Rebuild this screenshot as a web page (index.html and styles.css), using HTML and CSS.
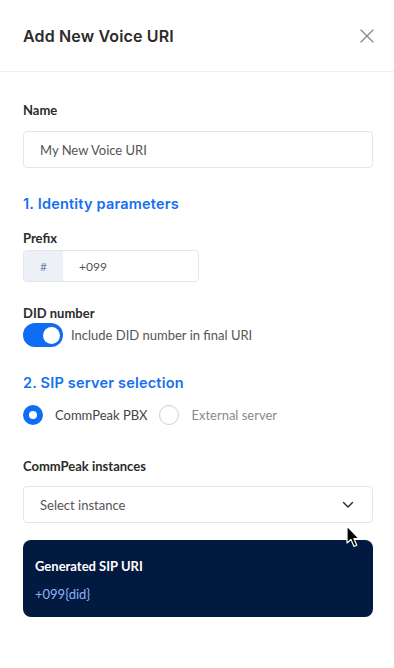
FILE: index.html
```html
<!DOCTYPE html>
<html lang="en">
<head>
    <meta charset="UTF-8">
    <meta name="viewport" content="width=device-width, initial-scale=1.0">
    <title>Add New Voice URI</title>
    <link rel="stylesheet" href="styles.css">
</head>
<body>
    <div class="panel">
        <div class="panel-header">
            <h1>Add New Voice URI</h1>
            <button class="close-btn" aria-label="Close">
                <svg width="14" height="14" viewBox="0 0 14 14">
                    <path d="M1 1 L13 13 M13 1 L1 13" stroke="#8a8a8a" stroke-width="1.4" stroke-linecap="round"/>
                </svg>
            </button>
        </div>

        <div class="panel-body">
            <label class="field-label name-label">Name</label>
            <div class="text-input">My New Voice URI</div>

            <h2 class="section-title first">1. Identity parameters</h2>

            <label class="field-label prefix-label">Prefix</label>
            <div class="prefix-input">
                <span class="prefix-addon">#</span>
                <span class="prefix-value">+099</span>
            </div>

            <label class="field-label did-label">DID number</label>
            <div class="toggle-row">
                <span class="toggle"><span class="toggle-knob"></span></span>
                <span class="toggle-text">Include DID number in final URI</span>
            </div>

            <h2 class="section-title second">2. SIP server selection</h2>

            <div class="radio-row">
                <span class="radio checked"></span>
                <span class="radio-text">CommPeak PBX</span>
                <span class="radio"></span>
                <span class="radio-text muted">External server</span>
            </div>

            <label class="field-label instances-label">CommPeak instances</label>
            <div class="select-input">
                <span>Select instance</span>
                <svg width="12" height="8" viewBox="0 0 12 8">
                    <path d="M1.5 1.5 L6 6 L10.5 1.5" fill="none" stroke="#333" stroke-width="1.5" stroke-linecap="round" stroke-linejoin="round"/>
                </svg>
            </div>

            <div class="uri-card">
                <div class="uri-title">Generated SIP URI</div>
                <div class="uri-value">+099{did}</div>
            </div>
        </div>

        <svg class="cursor" width="16" height="24" viewBox="0 0 16 24">
            <path d="M1 1 L1 18 L5 14.5 L8 21.5 L10.8 20.3 L7.9 13.5 L13 13.5 Z" fill="#000" stroke="#fff" stroke-width="1.2" stroke-linejoin="round"/>
        </svg>
    </div>
</body>
</html>
```

FILE: styles.css
```css
body {
    margin: 0;
    background: #ffffff;
    font-family: Lato, "Noto Sans", sans-serif;
    color: #2b2b2b;
}

.panel {
    position: relative;
    width: 394px;
    min-height: 668px;
}

.panel-header {
    height: 71px;
    padding: 0 20px 0 23px;
    display: flex;
    align-items: center;
    justify-content: space-between;
    border-bottom: 1px solid #efefef;
}

.panel-header h1 {
    margin: 0;
    font-family: Inter, sans-serif;
    font-size: 16px;
    font-weight: 600;
    letter-spacing: 0.15px;
    color: #2b2b2b;
}

.close-btn {
    border: none;
    background: none;
    padding: 0;
    width: 14px;
    height: 14px;
    display: flex;
    margin-top: 1px;
}

.panel-body {
    padding: 0 21px 0 23px;
    display: flex;
    flex-direction: column;
}

.field-label {
    display: block;
    font-size: 13px;
    font-weight: 700;
    line-height: 16px;
    color: #2b2b2b;
}

.name-label {
    margin-top: 30px;
}

.text-input,
.select-input {
    height: 35px;
    margin-top: 13px;
    padding: 0 16px;
    border: 1px solid #e6e6e6;
    border-radius: 4px;
    display: flex;
    align-items: center;
    font-size: 13px;
    color: #555;
}

.section-title {
    margin: 0;
    font-family: Inter, sans-serif;
    font-size: 14.5px;
    font-weight: 600;
    letter-spacing: 0.2px;
    line-height: 20px;
    color: #1570ef;
}

.section-title.first {
    margin-top: 26px;
}

.prefix-label {
    margin-top: 16px;
}

.prefix-input {
    width: 174px;
    height: 30px;
    margin-top: 4px;
    border: 1px solid #e6e6e6;
    border-radius: 4px;
    display: flex;
    overflow: hidden;
    font-size: 12px;
}

.prefix-addon {
    width: 39px;
    background: #edf0f6;
    color: #6d86b0;
    display: flex;
    align-items: center;
    justify-content: center;
}

.prefix-value {
    padding-left: 16px;
    display: flex;
    align-items: center;
    color: #555;
}

.did-label {
    margin-top: 23px;
}

.toggle-row {
    margin-top: 2px;
    display: flex;
    align-items: center;
    gap: 8px;
}

.toggle {
    width: 40px;
    height: 24px;
    border-radius: 12px;
    background: #0f6cf5;
    display: flex;
    align-items: center;
    justify-content: flex-end;
    padding: 0 3px;
    box-sizing: border-box;
}

.toggle-knob {
    width: 17px;
    height: 17px;
    border-radius: 50%;
    background: #fff;
}

.toggle-text {
    font-size: 13px;
    color: #555;
}

.section-title.second {
    margin-top: 26px;
}

.radio-row {
    margin-top: 12px;
    height: 20px;
    display: flex;
    align-items: center;
    font-size: 13px;
}

.radio {
    width: 20px;
    height: 20px;
    box-sizing: border-box;
    border-radius: 50%;
    border: 1px solid #cfcfcf;
    background: #fff;
}

.radio.checked {
    border: 6px solid #0f6cf5;
}

.radio-text {
    margin: 0 12px 0 12px;
    color: #444;
}

.radio-text.muted {
    color: #8a8a8a;
}

.instances-label {
    margin-top: 33px;
}

.select-input {
    margin-top: 12px;
    justify-content: space-between;
    padding-right: 18px;
}

.uri-card {
    margin-top: 17px;
    background: #031a40;
    border-radius: 8px;
    padding: 17px 12px 14px;
}

.uri-title {
    font-size: 13px;
    font-weight: 700;
    line-height: 18px;
    color: #ffffff;
}

.uri-value {
    margin-top: 10px;
    font-size: 13px;
    line-height: 18px;
    color: #8db4f5;
}

.cursor {
    position: absolute;
    left: 346px;
    top: 525px;
}
```
